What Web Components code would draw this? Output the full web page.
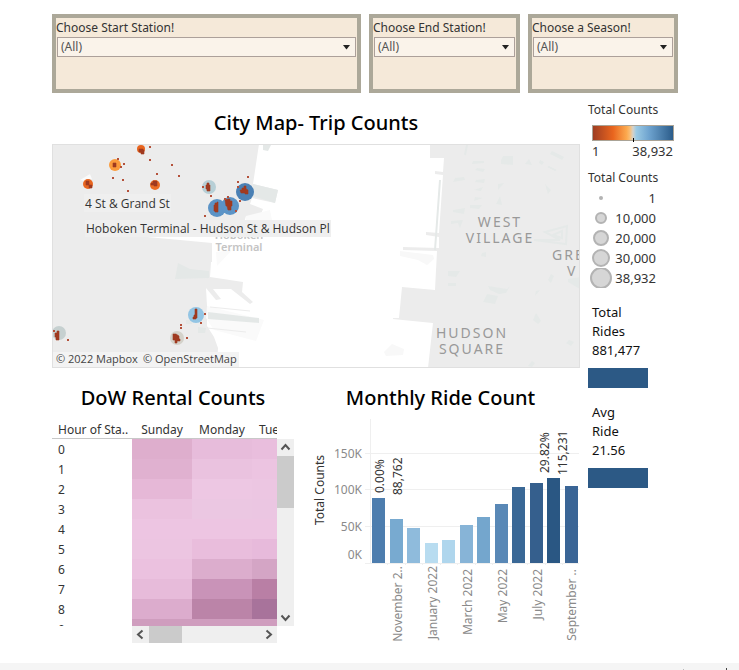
<!DOCTYPE html>
<html lang="en">
<head>
<meta charset="utf-8">
<title>City bike dashboard</title>
<style>
html, body { margin: 0; }
body { font: 12px/20px "Noto Sans", "Open Sans", sans-serif; color: #333; background: #fff; }
</style>
</head>
<body>
<bike-dashboard></bike-dashboard>
<script>
const define = (name, render) => customElements.define(name, class extends HTMLElement {
  connectedCallback() {
    if (this.shadowRoot) return;
    this.attachShadow({ mode: 'open' }).innerHTML = render(this);
  }
});

define('filter-card', el => `
<style>
:host { display: block; box-sizing: border-box; min-width: 0; min-height: 79px; border: 4px solid #aca899; background: #f5e9d9; }
label { display: block; line-height: 20px; height: 19px; white-space: nowrap; }
.box { position: relative; margin: 0 1px; }
select { display: block; width: 100%; height: 20px; box-sizing: border-box; appearance: none; border: 1px solid #aca09a; border-radius: 0; background: #faf3ea; color: #555; font: inherit; line-height: 18px; padding: 0 3px; }
svg { position: absolute; right: 6px; top: 8px; pointer-events: none; }
</style>
<label for="pick">${el.getAttribute('label')}</label>
<div class="box"><select id="pick"><option>(All)</option></select>
<svg width="7" height="5"><path d="M0 0H7L3.5 4.5Z" fill="#222"/></svg></div>`);

define('panel-title', () => `
<style>
:host { display: block; text-align: center; color: #000; font-size: 20px; font-weight: 500; line-height: 28px; white-space: nowrap; }
h2 { font: inherit; margin: 0; }
</style><h2><slot></slot></h2>`);

const stations = [
  [141, 149, 4, '#e8651f'], [115, 165, 6, '#fb9b3c'], [88, 184, 5, '#e8651f'], [155, 185, 5, '#ec6d23'],
  [209, 187, 7, '#b7cfd6'], [217, 208, 9, '#5b93c6'], [230, 206, 9, '#5b93c6'], [245, 192, 9, '#4a80b4'],
  [59, 333, 7, '#c6d0d0'], [177, 338, 7, '#d4d2ca'], [196, 315, 8, '#93c5e4']];
const marks = [
  'M139 149h4v1h1v4h-3v-2h-2z', 'M113 163h3v4h-3z', 'M86 181h3v4h3v3h-3v-3h-3z', 'M151 183h2v-2h4v5h-3v-1h-3z',
  'M206 185h1v-2h2v2h1v6h-3v-2h-1z', 'M214 205h1v-2h2v-1h1v10h-3v-1h-1z', 'M225 200l3-1h2v2h2v5h-1v4h-3l-1-4h-1z',
  'M240 190h2v-2h2v-2h2v3l2 1v4h-3v-1h-4z', 'M55 333h2v-2h2v9h-3v-3h-1z', 'M173 334h3l3 2v3h1v2h-3v2h-2v-3h-2z',
  'M195 309h2v9h-1v1h-3v-2h1v-2h1z'];
const dots = [[149,146],[149,159],[171,164],[178,175],[117,158],[123,163],[112,177],[122,179],[127,190],[156,173],[120,166],
  [237,181],[237,186],[247,176],[239,200],[202,186],[210,195],[204,215],[227,196],[235,210],[224,198],[67,339],[53,330],
  [180,324],[180,327],[186,337],[204,313],[200,322]];
define('trip-map', () => `
<style>
:host { display: block; border: 1px solid #e0e0e0; box-sizing: border-box; overflow: hidden; background: #fff; }
svg { display: block; width: 100%; height: auto; }
.area { font-size: 14px; letter-spacing: 2px; fill: #999; text-anchor: middle; }
.left { text-anchor: start; }
.tip { fill: #333; font-family: "Open Sans", "Noto Sans", sans-serif; }
.town { font-size: 11px; fill: #c4c4c4; font-weight: 600; text-anchor: middle; }
.credit { font-size: 11px; fill: #444; font-family: "Open Sans", sans-serif; }
</style>
<svg viewBox="53 145 526 222" role="img" aria-label="Map of trip counts">
<path fill="#ececec" d="M52 144H259L253 184L278 190L275 203L252 198L250 204L263 209L259 219L246 216L240 236L213 240L147 237L212 248L210 277L243 282L242 292L253 302L250 304L231 289H213L221 299L216 300L206 288L207 306V326L214 337L218 348L217 368H52Z"/>
<path fill="#ececec" d="M140 236H212V262H140z"/>
<path fill="#fff" d="M147 237H240V260H212V243L180 240Z"/>
<path fill="#fafafa" d="M207 306L264 320L256 341L214 330L206 318Z M216 252L232 250L217 266Z M84 206l8-3v2z M80 180l10-6 2 5-8 2z M246 216l24-6 2 10-14 18h-14z"/>
<path fill="#e4e8e7" d="M253 184L278 190L275 203L252 196Z M263 145h8l-3 6-5-1z M178 263L190 269L209 271V278L175 279Z M208 312L259 318V323L208 319Z M186 320h6v4h-6z M198 327l8 1-1 5h-7z"/>
<path stroke="#ececec" stroke-width="1" d="M210 307L250 311M207 328L246 332M71 306L89 308"/>
<path fill="#ececec" d="M430 144V158H444L443 172L435 171V174L443 175L439 233L426 232V235L439 237V248L403 247V250L437 251L435 290L402 287L399 318L393 318V319L433 323L428 368H580V144Z"/>
<path fill="#f8f8f8" d="M400 251L433 255L434 259L427 265L418 260L400 256Z M384 352l8-8 12 5-1 6-17 1z"/>
<path fill="#e5e9e8" d="M503 156h10v9l-12-1v-4z M525 164l4-5 3 6z M540 160l4 2-2 3-3-2z M552 151l12 6-2 3-12-6z M549 166l8 4-2 1-8-4z M473 161h11v2l-12 1z M477 168l8 1-2 3-8-2z M455 178l9-1 1 3-12 2z M476 180l9-1-1 4-9-1z M474 190l9-3-2 4z M475 197l8 1-9 3z M498 184l6-1-6 7z M500 196l2 9-6-1z M545 184l6 6-3 4z M470 205h12l-3 4-9-1z M453 210l12-2-1 6-11-2z M451 221l12-1-3 8-2-5-7 1z M482 253l4-1v5l-5-1z M448 271h12l-4 6-8-1z M448 283h8v3h-8z M488 286l19 3 3-3-4 7-7 1-9-4z M487 294l11 2-3 8-12-2z M551 274l3 2-3 7-3-3z M536 291l4-1-5 6z M536 313l5 8-3 3-5-4z M569 340l5 2-3 4-5-3z M532 361l3 2-3 4-4-1z M568 279l12-2v12l-12-7z"/>
<path fill="none" stroke="#e5e9e8" stroke-width="2" d="M440 180L435 250M467 145L465 155M545 232L567 226L566 244L534 240L560 240ZM553 235l9-4v7z"/>
${stations.map((s, i) => `<circle cx="${s[0]}" cy="${s[1]}" r="${s[2]}" fill="${s[3]}"/><path d="${marks[i]}" fill="#a03a20" stroke="#a03a20" stroke-width=".6"/>`).join('')}
<path fill="#b4513a" d="${dots.map(d => `M${d[0]} ${d[1]}h2v2h-2z`).join('')}"/>
<text class="town" x="239" y="239">Hoboken</text><text class="town" x="239" y="251">Terminal</text>
<path fill="#efefef" d="M84 194h87v18H84z M85 220h246v17H85z"/>
<text class="tip" x="85" y="208">4 St &amp; Grand St</text>
<text class="tip" x="86" y="233">Hoboken Terminal - Hudson St &amp; Hudson Pl</text>
<g class="area"><text x="500" y="227">WEST</text><text x="500" y="243">VILLAGE</text><text x="472" y="338">HUDSON</text><text x="472" y="354">SQUARE</text><text class="left" x="552" y="260">GRE</text><text class="left" x="567" y="276">V</text></g>
<path fill="#f3f3f3" d="M53 352h186v15H53z"/>
<text class="credit" x="56" y="363">© 2022 Mapbox</text><text class="credit" x="143" y="363">© OpenStreetMap</text>
</svg>`);

define('scroll-bar', el => {
  const v = el.hasAttribute('vertical');
  const icon = d => `<svg width="17" height="17" viewBox="0 0 17 17"><path d="${d}" fill="none" stroke="#555" stroke-width="2"/></svg>`;
  return `
<style>
:host { display: flex; flex-direction: ${v ? 'column' : 'row'}; background: #efefef; }
button { flex: none; width: 17px; height: 17px; border: 0; padding: 0; background: none; }
svg { display: block; }
.track { flex: 1; }
.thumb { background: #cbcbcb; ${v ? 'height: 52px' : 'width: 33px; height: 17px'}; }
</style>
<button aria-label="${v ? 'Scroll up' : 'Scroll left'}">${icon(v ? 'M4.500 10.500L8.500 6L12.500 10.500' : 'M10.500 4.500L6 8.500L10.500 12.500')}</button>
<div class="track"><div class="thumb"></div></div>
<button aria-label="${v ? 'Scroll down' : 'Scroll right'}">${icon(v ? 'M4.500 6.500L8.500 11L12.500 6.500' : 'M6.500 4.500L11 8.500L6.500 12.500')}</button>`;
});

const heat = [
  ['#deaecd', '#e7bcdb', '#e9bedd'], ['#e0b1d0', '#eac2df', '#ecc4e1'], ['#e6b8d7', '#edc7e3', '#ecc6e2'],
  ['#ebc2df', '#ebc7e2', '#ebc6e2'], ['#edc5e2', '#edc5e2', '#edc5e2'], ['#ecc5e1', '#e9bddc', '#e7badb'],
  ['#ebc1df', '#dcadcd', '#d4a5c5'], ['#e7bbda', '#c993b8', '#b97fa5'], ['#dcaccd', '#bb84a8', '#a8739b'],
  ['#cf9dbe', '#cf9dbe', '#cf9dbe']];
define('heat-table', () => `
<style>
:host { display: grid; grid-template-columns: minmax(0, 1fr) 17px; grid-template-rows: 20px 187px 17px; }
.view { grid-row: 1 / 3; overflow: hidden; }
table { border-collapse: collapse; table-layout: fixed; width: 260px; }
th { font-weight: 400; padding: 0; text-align: center; white-space: nowrap; line-height: 18px; padding-top: 2px; }
th:first-child { text-align: left; padding-left: 6px; }
thead tr { height: 20px; box-shadow: inset 0 -1px #c8c8c8; }
tbody tr { height: 20px; }
td { padding: 0; }
.v { grid-area: 2 / 2; } .h { grid-area: 3 / 1; margin-left: 80px; }
</style>
<div class="view"><table>
<colgroup><col style="width:80px"><col style="width:60px"><col style="width:60px"><col style="width:60px"></colgroup>
<thead><tr><th>Hour of Sta..</th><th>Sunday</th><th>Monday</th><th>Tuesday</th></tr></thead>
<tbody>${heat.map((r, i) => `<tr><th>${i}</th>${r.map(c => `<td style="background:${c}"></td>`).join('')}</tr>`).join('')}</tbody>
</table></div>
<scroll-bar class="v" vertical></scroll-bar><scroll-bar class="h"></scroll-bar>`);

const bars = [[372,498,'#4d7dae'],[390,519,'#78aad0'],[407,528,'#8fbbdc'],[425,543,'#b8dcf0'],[442,540,'#afd6ed'],[460,525,'#87b4d7'],
  [477,517,'#74a6cd'],[495,504,'#5988b6'],[512,487,'#3a6896'],[530,483,'#355f8d'],[547,478,'#2a5783'],[565,486,'#3a6596']];
const up = (x, y, t, a) => `<text transform="translate(${x} ${y}) rotate(-90)" text-anchor="${a}">${t}</text>`;
define('month-chart', () => `
<style>
:host { display: block; }
svg { display: block; width: 100%; height: auto; overflow: visible; }
.axis { fill: #8a8a8a; } .label { fill: #333; }
</style>
<svg viewBox="313 412 267 232" role="img" aria-label="Monthly ride count">
<path d="M365 453.500H579M365 489.500H579M365 526.500H579M365 563.500H579M370.500 419V563M387.500 563v2M405.500 563v2M422.500 563v2M440.500 563v2M457.500 563v2M475.500 563v2M492.500 563v2M510.500 563v2M527.500 563v2M545.500 563v2M562.500 563v2" stroke="#efefef" fill="none"/>
${bars.map(b => `<rect x="${b[0]}" y="${b[1]}" width="13" height="${563 - b[1]}" fill="${b[2]}"/>`).join('')}
<g class="axis" text-anchor="end"><text x="362" y="458">150K</text><text x="362" y="494">100K</text><text x="362" y="531">50K</text><text x="362" y="559">0K</text></g>
<g class="axis">${up(402,566,'November 2..','end')}${up(437,566,'January 2022','end')}${up(472,569,'March 2022','end')}${up(507,569,'May 2022','end')}${up(542,569,'July 2022','end')}${up(576,569,'September ..','end')}</g>
<g class="label">${up(324,490,'Total Counts','middle')}${up(384,493,'0.00%','start')}${up(402,495,'88,762','start')}${up(549,473,'29.82%','start')}${up(567,475,'115,231','start')}</g>
</svg>`);

define('color-legend', () => `
<style>
:host { display: block; }
.ramp { margin: 5px 4px 0; height: 16px; box-sizing: border-box; border: 1px solid #aaa396; position: relative;
 background: linear-gradient(90deg, #9e3d22, #e9651e 25%, #fca94e 42%, #f9bd74 46%, #d5d2ca 50%, #9bcae4 54%, #6ea3cf 70%, #2b5c8a); }
.ramp::after { content: ""; position: absolute; left: 50%; bottom: -2px; width: 1px; height: 4px; background: #000; }
.ends { display: flex; justify-content: space-between; padding: 0 5px 0 4px; font-size: 13px; }
</style>
<div>Total Counts</div><div class="ramp"></div><div class="ends"><span>1</span><span>38,932</span></div>`);

define('size-legend', () => `
<style>
:host { display: block; }
ul { list-style: none; margin: 0; padding: 0; width: 68px; }
li { display: flex; justify-content: space-between; font-size: 13px; height: 20px; }
svg { flex: none; }
</style>
<div>Total Counts</div>
<ul>${[['1', 2], ['10,000', 6], ['20,000', 8], ['30,000', 9], ['38,932', 11]].map(([t, r]) =>
`<li><svg width="26" height="20"><circle cx="13" cy="10" r="${r - (r > 2 ? 1 : 0)}" fill="${r > 2 ? '#d6d6d6' : '#b3b3b3'}" stroke="#b3b3b3" stroke-width="${r > 2 ? 2 : 0}"/></svg><span>${t}</span></li>`).join('')}</ul>`);

define('kpi-tile', () => `
<style>
:host { display: block; width: 60px; font-size: 13px; line-height: 19px; color: #111; }
div { padding-left: 4px; white-space: nowrap; }
i { display: block; height: 20px; margin-top: 8px; background: #2c5985; }
</style>
<div><slot></slot></div><i></i>`);

define('bike-dashboard', () => `
<style>
:host { display: flex; flex-direction: column; min-height: 100vh; }
main { flex: 1; padding: 14px 61px 0 52px; }
.filters { display: grid; grid-template-columns: 309fr 151fr 150fr; gap: 8px; }
.body { display: grid; grid-template-columns: minmax(0, 1fr) 90px; gap: 8px; }
.map-title { padding: 16px 0 7px; }
.lower { display: grid; grid-template-columns: 242px minmax(0, 1fr); column-gap: 7px; padding-top: 16px; }
.lower section > panel-title { height: 28px; }
heat-table { margin-top: 7px; }
month-chart { margin-left: 12px; }
aside { padding-top: 7px; }
size-legend { margin-top: 7px; }
kpi-tile { margin-top: 15px; }
footer { height: 7px; background: #f5f5f5; display: flex; justify-content: flex-end; align-items: flex-end; gap: 42px; padding-right: 12px; }
footer i { width: 1px; height: 1px; background: #bbb; } footer i + i { height: 2px; background: #444; }
</style>
<main>
<div class="filters">
<filter-card label="Choose Start Station!"></filter-card><filter-card label="Choose End Station!"></filter-card><filter-card label="Choose a Season!"></filter-card>
</div>
<div class="body">
<div>
<panel-title class="map-title">City Map- Trip Counts</panel-title>
<trip-map></trip-map>
<div class="lower">
<section><panel-title>DoW Rental Counts</panel-title><heat-table></heat-table></section>
<section><panel-title>Monthly Ride Count</panel-title><month-chart></month-chart></section>
</div>
</div>
<aside>
<color-legend></color-legend><size-legend></size-legend>
<kpi-tile>Total<br>Rides<br>881,477</kpi-tile><kpi-tile>Avg<br>Ride<br>21.56</kpi-tile>
</aside>
</div>
</main>
<footer><i></i><i></i></footer>`);
</script>
</body>
</html>
